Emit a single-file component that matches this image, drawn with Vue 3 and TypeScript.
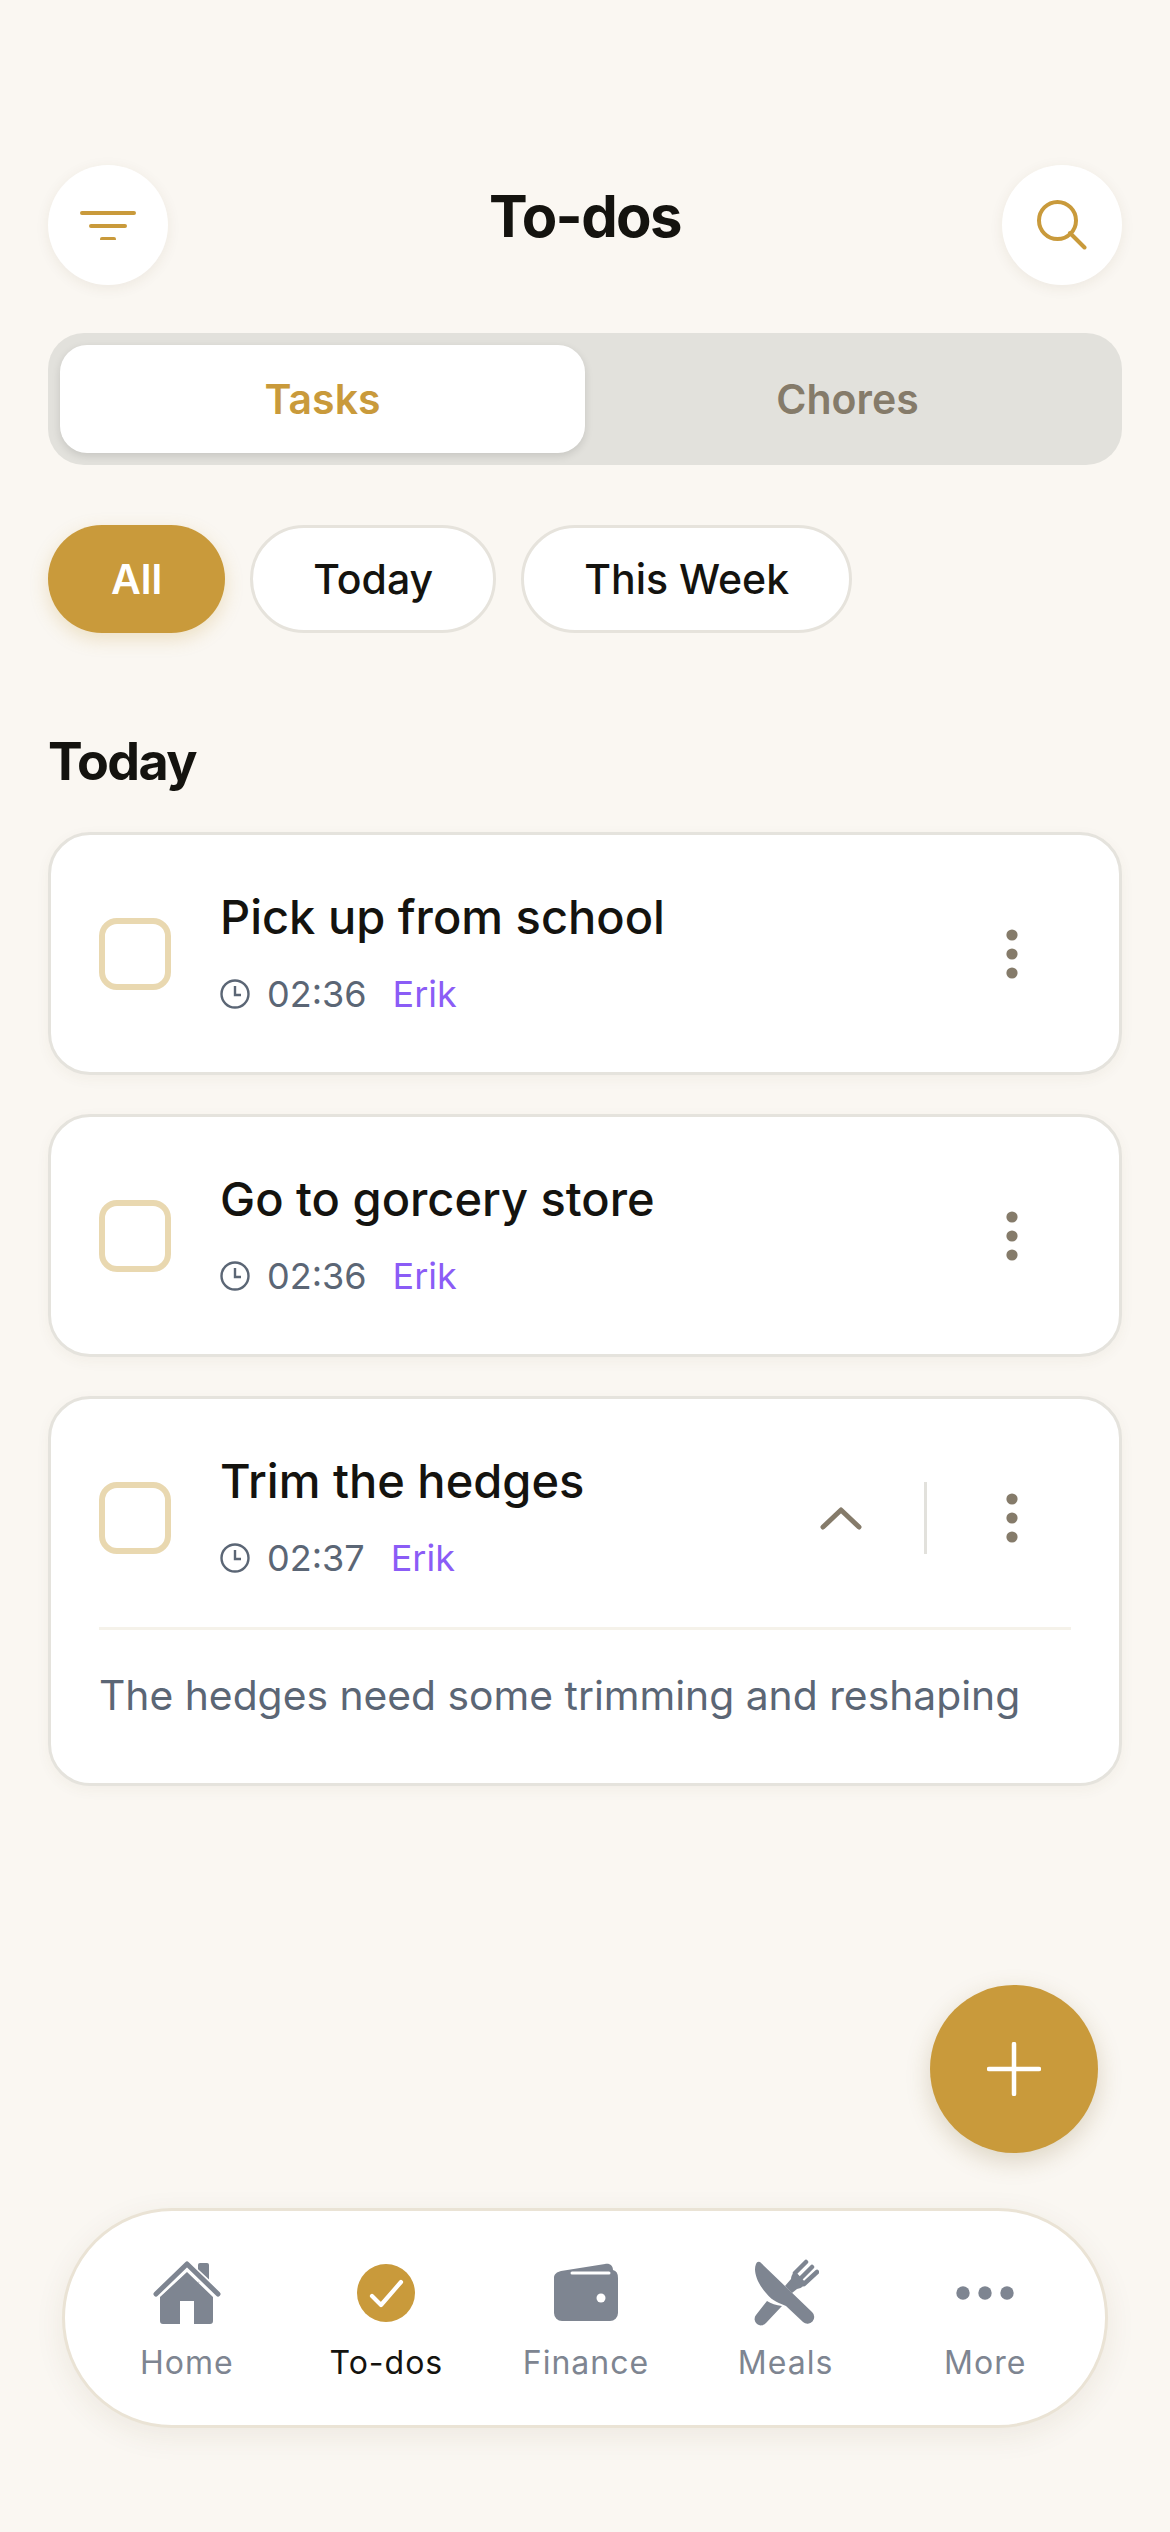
<template>
  <div class="screen">
    <header class="top">
      <button class="round">
        <svg width="56" height="30" viewBox="0 0 56 30">
          <path d="M2 3H54M11 16H45M22 29H34" fill="none" stroke="#c99a3b" stroke-width="4" stroke-linecap="round" />
        </svg>
      </button>
      <h1>To-dos</h1>
      <button class="round">
        <svg width="50" height="50" viewBox="0 0 50 50">
          <circle cx="20.5" cy="20.5" r="18.5" fill="none" stroke="#c99a3b" stroke-width="4" />
          <path d="M33 33L47.5 47.5" fill="none" stroke="#c99a3b" stroke-width="4" stroke-linecap="round" />
        </svg>
      </button>
    </header>

    <div class="segment">
      <div class="seg active">Tasks</div>
      <div class="seg">Chores</div>
    </div>

    <div class="pills">
      <div v-for="p in pills" :key="p" class="pill" :class="{ on: p === 'All' }">{{ p }}</div>
    </div>

    <h2>Today</h2>

    <div class="list">
      <div v-for="t in tasks" :key="t.title" class="card">
        <div class="row" :class="{ open: t.note }">
          <div class="check"></div>
          <div class="info">
            <div class="title">{{ t.title }}</div>
            <div class="meta">
              <svg width="30" height="30" viewBox="0 0 30 30">
                <circle cx="15" cy="15" r="13.5" fill="none" stroke="#5b6675" stroke-width="2.4" />
                <path d="M15 7V16H21" fill="none" stroke="#5b6675" stroke-width="2.4" />
              </svg>
              <span class="time">{{ t.time }}</span>
              <span class="who">Erik</span>
            </div>
          </div>
          <svg v-if="t.note" class="chev" width="42" height="24" viewBox="0 0 42 24">
            <path d="M3 21L21 4L39 21" fill="none" stroke="#857b6a" stroke-width="5" stroke-linecap="round" stroke-linejoin="round" />
          </svg>
          <div v-if="t.note" class="vline"></div>
          <svg class="dots" width="12" height="50" viewBox="0 0 12 50">
            <circle cx="6" cy="6" r="5.6" fill="#857b6a" />
            <circle cx="6" cy="25" r="5.6" fill="#857b6a" />
            <circle cx="6" cy="44" r="5.6" fill="#857b6a" />
          </svg>
        </div>
        <div v-if="t.note" class="note">{{ t.note }}</div>
      </div>
    </div>

    <button class="fab">
      <svg width="54" height="54" viewBox="0 0 54 54">
        <path d="M27 2V52M2 27H52" fill="none" stroke="#fff" stroke-width="4.5" stroke-linecap="round" />
      </svg>
    </button>

    <nav class="tabbar">
      <div class="tab">
        <svg width="68" height="64" viewBox="0 0 68 64">
          <rect x="45" y="2" width="11" height="20" rx="2" fill="#7e8591" />
          <path d="M34 11L60 36V60a3 3 0 0 1-3 3H41V40H27V63H10a3 3 0 0 1-3-3V36Z" fill="#7e8591" />
          <path d="M3 33L34 4L65 33" fill="none" stroke="#fff" stroke-width="9" />
          <path d="M3 33L34 3L65 33" fill="none" stroke="#7e8591" stroke-width="5" stroke-linecap="round" stroke-linejoin="round" />
        </svg>
        <span>Home</span>
      </div>
      <div class="tab current">
        <svg width="58" height="64" viewBox="0 0 58 64">
          <circle cx="29" cy="32" r="29" fill="#c99a3b" />
          <path d="M15 35L24 44L44 21" fill="none" stroke="#fff" stroke-width="4.2" stroke-linecap="round" stroke-linejoin="round" />
        </svg>
        <span>To-dos</span>
      </div>
      <div class="tab">
        <svg width="64" height="64" viewBox="0 0 64 64">
          <path d="M7 10L51 3C56 2 59 5 59 9Q64 10 64 17V52a8 8 0 0 1-8 8H8a8 8 0 0 1-8-8V17C0 13 3 11 7 10Z" fill="#7e8591" />
          <path d="M18 12H55" fill="none" stroke="#fff" stroke-width="3" stroke-linecap="round" />
          <circle cx="47" cy="37" r="4.5" fill="#fff" />
        </svg>
        <span>Finance</span>
      </div>
      <div class="tab">
        <svg width="66" height="68" viewBox="0 0 66 68">
          <path d="M53 3L42 14M59 8L47 20M64 13L51 25" fill="none" stroke="#7e8591" stroke-width="4.5" stroke-linecap="round" />
          <path d="M42 12L53 24Q50 29 44 30L39 34L32 27L38 20Q38 16 42 12Z" fill="#7e8591" />
          <path d="M14 42Q20 46 29 47L13 64a6 6 0 0 1-10-8Z" fill="#7e8591" />
          <path d="M7 3L59 53a6.5 6.5 0 0 1-9 10L33 47C27 44 20 43 13 34C4 24 0 12 3 5Q4 2 7 3Z" fill="#7e8591" />
        </svg>
        <span>Meals</span>
      </div>
      <div class="tab">
        <svg width="58" height="64" viewBox="0 0 58 64">
          <circle cx="7" cy="32" r="6.7" fill="#7e8591" />
          <circle cx="29" cy="32" r="6.7" fill="#7e8591" />
          <circle cx="51" cy="32" r="6.7" fill="#7e8591" />
        </svg>
        <span>More</span>
      </div>
    </nav>
  </div>
</template>

<script setup lang="ts">
interface Task {
  title: string
  time: string
  note?: string
}

const pills = ['All', 'Today', 'This Week']

const tasks: Task[] = [
  { title: 'Pick up from school', time: '02:36' },
  { title: 'Go to gorcery store', time: '02:36' },
  { title: 'Trim the hedges', time: '02:37', note: 'The hedges need some trimming and reshaping' }
]
</script>

<style>
body {
  background: #faf7f2;
}
</style>

<style scoped>
.screen {
  position: relative;
  height: 2532px;
  box-sizing: border-box;
  padding: 165px 48px 0;
  background: #faf7f2;
  font-family: Inter, 'Liberation Sans', sans-serif;
  color: #14130f;
  overflow: hidden;
}

button {
  border: 0;
  padding: 0;
  font: inherit;
}

.top {
  display: flex;
  align-items: center;
  justify-content: space-between;
  height: 120px;
}

.top h1 {
  margin: 0 0 18px;
  font-size: 58px;
  font-weight: 700;
  letter-spacing: -1.6px;
}

.round {
  display: flex;
  align-items: center;
  justify-content: center;
  width: 120px;
  height: 120px;
  border-radius: 50%;
  background: #fff;
  box-shadow: 0 3px 14px rgba(90, 70, 30, 0.08);
}

.segment {
  display: flex;
  height: 132px;
  margin-top: 48px;
  padding: 12px;
  box-sizing: border-box;
  border-radius: 36px;
  background: #e2e1dc;
}

.seg {
  flex: 1;
  display: flex;
  align-items: center;
  justify-content: center;
  font-size: 41px;
  font-weight: 600;
  color: #857b6a;
}

.seg.active {
  border-radius: 27px;
  background: #fff;
  color: #c99a3b;
  box-shadow: 0 3px 9px rgba(0, 0, 0, 0.12);
}

.pills {
  display: flex;
  gap: 25px;
  margin-top: 60px;
}

.pill {
  height: 108px;
  padding: 0 60px;
  box-sizing: border-box;
  display: flex;
  align-items: center;
  border: 3px solid #e6e3dc;
  border-radius: 54px;
  background: #fff;
  font-size: 41px;
  font-weight: 500;
}

.pill.on {
  padding: 0 63px;
  border: 0;
  background: #c99a3b;
  color: #fff;
  font-weight: 600;
  box-shadow: 0 6px 18px rgba(201, 154, 59, 0.25);
}

h2 {
  margin: 100px 0 0;
  font-size: 52px;
  line-height: 58px;
  font-weight: 700;
  letter-spacing: -1.6px;
}

.list {
  display: flex;
  flex-direction: column;
  gap: 39px;
  margin-top: 41px;
}

.card {
  padding: 0 48px;
  border: 3px solid #e5e3dd;
  border-radius: 42px;
  background: #fff;
  box-shadow: 0 4px 14px rgba(90, 70, 30, 0.05);
}

.row {
  display: flex;
  align-items: center;
  height: 237px;
}

.row.open {
  margin-bottom: -9px;
}

.check {
  flex: none;
  box-sizing: border-box;
  width: 72px;
  height: 72px;
  border: 6px solid #e9d8b0;
  border-radius: 18px;
}

.info {
  flex: 1;
  margin: 0 0 3px 49px;
}

.title {
  font-size: 47px;
  line-height: 56px;
  font-weight: 500;
}

.meta {
  display: flex;
  align-items: center;
  margin-top: 27px;
  font-size: 36px;
  line-height: 44px;
}

.time {
  margin-left: 17px;
  color: #5b6675;
}

.who {
  margin-left: 26px;
  color: #8b5cf6;
}

.chev {
  margin-right: 62px;
}

.vline {
  width: 3px;
  height: 72px;
  margin-right: 79px;
  background: #e2e1dc;
}

.dots {
  margin-right: 53px;
}

.note {
  padding: 37px 0 60px;
  border-top: 3px solid #f5f2ea;
  font-size: 40.8px;
  line-height: 56px;
  color: #5b6675;
}

.fab {
  position: absolute;
  left: 930px;
  top: 1985px;
  display: flex;
  align-items: center;
  justify-content: center;
  width: 168px;
  height: 168px;
  border-radius: 50%;
  background: #c99a3b;
  box-shadow: 0 8px 24px rgba(120, 90, 30, 0.22);
}

.tabbar {
  position: absolute;
  left: 62px;
  top: 2208px;
  box-sizing: border-box;
  display: flex;
  width: 1046px;
  height: 220px;
  padding: 48px 20px 0 22px;
  border: 3px solid #eae3d5;
  border-radius: 110px;
  background: #fff;
  box-shadow: 0 8px 30px rgba(90, 70, 30, 0.08);
}

.tab {
  flex: 1;
  display: flex;
  flex-direction: column;
  align-items: center;
  font-size: 32px;
  font-weight: 400;
  color: #7e8591;
}

.tab svg {
  display: block;
  height: 68px;
}

.tab span {
  margin-top: 16px;
  line-height: 40px;
  letter-spacing: 1px;
}

.tab.current span {
  color: #14130f;
}
</style>
